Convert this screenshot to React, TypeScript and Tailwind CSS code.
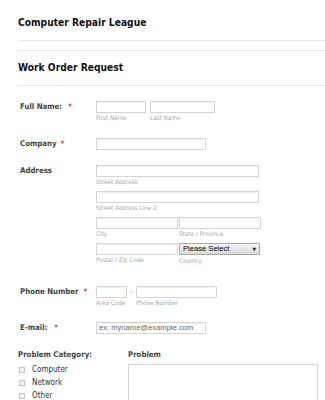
import React from "react";

const Star = ({ ml }: { ml: string }) => (
  <span className={`text-[#e53935] ${ml}`}>*</span>
);

const Sub = ({ children }: { children: React.ReactNode }) => (
  <div className="text-[6.3px] leading-[8px] text-[#a8a8a8] mt-[1px] font-['DejaVu_Sans_Condensed','DejaVu_Sans',sans-serif]">{children}</div>
);

const Input = ({ w, placeholder }: { w: string; placeholder?: string }) => (
  <div className={`${w} h-[12px] border border-[#d4d4d4] bg-white flex items-center px-[2px]`}>
    <div className="w-full h-full border-t border-dotted border-[#e4e4e4] flex items-center">
      {placeholder && (
        <span className="text-[7.6px] leading-[10px] text-[#666] font-['Liberation_Sans',sans-serif] -mt-[1px]">{placeholder}</span>
      )}
    </div>
  </div>
);

const Label = ({ children }: { children: React.ReactNode }) => (
  <div className="w-[78px] pl-[2px] shrink-0 text-[7.8px] leading-[10px] font-bold text-[#444] pt-[1px]">{children}</div>
);

const Checkbox = ({ label }: { label: string }) => (
  <div className="flex items-center h-[13px]">
    <div className="w-[6px] h-[6px] border border-[#c4c4c4] bg-[#f0f0f0] ml-[1px]" />
    <span className="ml-[7px] text-[8px] leading-[10px] text-[#333]">{label}</span>
  </div>
);

export default function App() {
  return (
    <div className="w-[325px] h-[400px] overflow-hidden bg-white font-['DejaVu_Sans_Condensed','DejaVu_Sans',sans-serif] text-[#222]">
      <div className="pl-[18px]">
        <div className="h-[41px] pt-[16px] border-b border-[#e8e8e8]">
          <div className="text-[10.2px] leading-[13px] font-bold text-[#111]">Computer Repair League</div>
        </div>
        <div className="mt-[9px] h-[36px] pt-[10px] border-t border-b border-[#e8e8e8]">
          <div className="text-[10.2px] leading-[14px] font-bold text-[#111]">Work Order Request</div>
        </div>
      </div>

      {/* Full name */}
      <div className="flex pl-[18px] mt-[15px]">
        <Label>Full Name:<Star ml="ml-[6px]" /></Label>
        <div className="flex gap-[4px]">
          <div>
            <Input w="w-[50px]" />
            <Sub>First Name</Sub>
          </div>
          <div>
            <Input w="w-[65px]" />
            <Sub>Last Name</Sub>
          </div>
        </div>
      </div>

      {/* Company */}
      <div className="flex pl-[18px] mt-[16px]">
        <Label>Company<Star ml="ml-[4px]" /></Label>
        <Input w="w-[110px]" />
      </div>

      {/* Address */}
      <div className="flex pl-[18px] mt-[15px]">
        <Label>Address</Label>
        <div className="flex flex-col">
          <Input w="w-[163px]" />
          <Sub>Street Address</Sub>
          <div className="mt-[5px]">
            <Input w="w-[163px]" />
            <Sub>Street Address Line 2</Sub>
          </div>
          <div className="flex gap-[1px] mt-[5px]">
            <div>
              <Input w="w-[82px]" />
              <Sub>City</Sub>
            </div>
            <div>
              <Input w="w-[82px]" />
              <Sub>State / Province</Sub>
            </div>
          </div>
          <div className="flex gap-[1px] mt-[5px]">
            <div>
              <Input w="w-[82px]" />
              <Sub>Postal / Zip Code</Sub>
            </div>
            <div>
              <div className="w-[81px] h-[12px] border border-[#a9a9a9] rounded-[1px] bg-gradient-to-b from-[#f4f4f4] to-[#d9d9d9] flex items-center justify-between px-[3px]">
                <span className="text-[7.6px] leading-[10px] font-['Liberation_Sans',sans-serif] text-black">Please Select</span>
                <span className="text-[5px] leading-[8px] text-[#222]">▼</span>
              </div>
              <div className="mt-[2px]"><Sub>Country</Sub></div>
            </div>
          </div>
        </div>
      </div>

      {/* Phone */}
      <div className="flex pl-[18px] mt-[21px]">
        <Label>Phone Number<Star ml="ml-[5px]" /></Label>
        <div className="flex">
          <div>
            <Input w="w-[31px]" />
            <Sub>Area Code</Sub>
          </div>
          <div className="w-[9px] text-center text-[7px] leading-[12px] text-[#666]">-</div>
          <div>
            <Input w="w-[81px]" />
            <Sub>Phone Number</Sub>
          </div>
        </div>
      </div>

      {/* Email */}
      <div className="flex pl-[18px] mt-[15px]">
        <Label>E-mail:<Star ml="ml-[7px]" /></Label>
        <Input w="w-[110px]" placeholder="ex: myname@example.com" />
      </div>

      {/* Problem */}
      <div className="flex pl-[18px] mt-[16px]">
        <div className="w-[110px] shrink-0">
          <div className="text-[7.8px] leading-[10px] font-bold text-[#444]">Problem Category:</div>
          <div className="mt-[3px] flex flex-col">
            <Checkbox label="Computer" />
            <Checkbox label="Network" />
            <Checkbox label="Other" />
          </div>
        </div>
        <div>
          <div className="text-[7.8px] leading-[10px] font-bold text-[#444]">Problem</div>
          <div className="mt-[4px] w-[190px] h-[60px] border border-[#d4d4d4]" />
        </div>
      </div>
    </div>
  );
}
